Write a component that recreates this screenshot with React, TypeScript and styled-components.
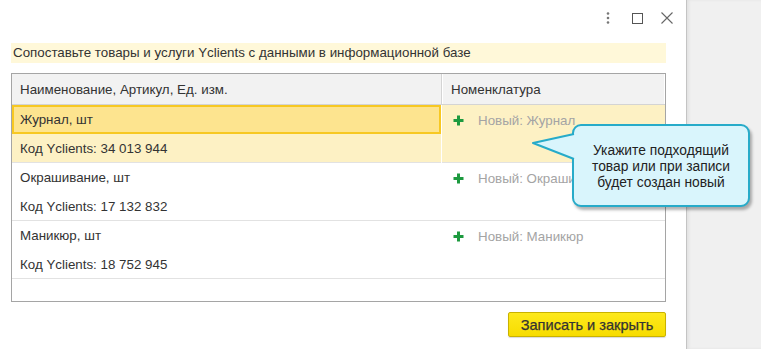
import React from "react";
import styled, { createGlobalStyle } from "styled-components";

const GlobalStyle = createGlobalStyle`
  html, body {
    margin: 0;
    padding: 0;
    background: #f0f0f0;
  }
  body {
    font-family: "Liberation Sans", Arial, sans-serif;
    font-size: 13.35px;
    color: #333;
  }
`;

type Item = {
  name: string;
  code: string;
  product: string;
};

const items: Item[] = [
  { name: "Журнал, шт", code: "34 013 944", product: "Журнал" },
  { name: "Окрашивание, шт", code: "17 132 832", product: "Окрашивание" },
  { name: "Маникюр, шт", code: "18 752 945", product: "Маникюр" },
];

const PlusIcon = () => (
  <svg width="11" height="11" viewBox="0 0 11 11">
    <path d="M5.5 0.5v10M0.5 5.5h10" stroke="#1d9a3f" strokeWidth="3" />
  </svg>
);

const App = () => {
  return (
    <Page>
      <GlobalStyle />
      <Dialog>
        <TitleBar>
          <IconButton $narrow aria-label="more">
            <svg width="4" height="12" viewBox="0 0 4 12">
              <circle cx="2" cy="1.5" r="1.3" fill="#777" />
              <circle cx="2" cy="6" r="1.3" fill="#777" />
              <circle cx="2" cy="10.5" r="1.3" fill="#777" />
            </svg>
          </IconButton>
          <IconButton aria-label="maximize">
            <svg width="11" height="11" viewBox="0 0 11 11">
              <rect x="0.5" y="0.5" width="10" height="10" fill="none" stroke="#555" />
            </svg>
          </IconButton>
          <IconButton aria-label="close">
            <svg width="12" height="12" viewBox="0 0 12 12">
              <path d="M0.5 0.5l11 11M11.5 0.5l-11 11" stroke="#666" strokeWidth="1.1" />
            </svg>
          </IconButton>
        </TitleBar>

        <Banner>Сопоставьте товары и услуги Yclients с данными в информационной базе</Banner>

        <Table>
          <HeaderRow>
            <HeaderCell>Наименование, Артикул, Ед. изм.</HeaderCell>
            <HeaderCell>Номенклатура</HeaderCell>
          </HeaderRow>
          {items.map((item, i) => (
            <Row key={item.code} $active={i === 0}>
              <NameCell $active={i === 0}>
                <NameLine $selected={i === 0}>{item.name}</NameLine>
                <NameLine>Код Yclients: {item.code}</NameLine>
              </NameCell>
              <ProductCell>
                <NewLink>
                  <PlusIcon />
                  <span>Новый: {item.product}</span>
                </NewLink>
              </ProductCell>
            </Row>
          ))}
        </Table>

        <Footer>
          <PrimaryButton>Записать и закрыть</PrimaryButton>
        </Footer>

        <Tooltip>
          <TooltipTail width="44" height="30" viewBox="0 0 44 30">
            <path d="M42 2 L1 11 L42 27" fill="#d9f5fc" stroke="#27abc9" strokeWidth="2" strokeLinejoin="round" />
          </TooltipTail>
          Укажите подходящий
          <br />
          товар или при записи
          <br />
          будет создан новый
        </Tooltip>
      </Dialog>
      <Side />
    </Page>
  );
};

export default App;

const Page = styled.div`
  display: flex;
  width: 761px;
  height: 349px;
  overflow: hidden;
`;

const Dialog = styled.div`
  position: relative;
  width: 687px;
  height: 349px;
  box-sizing: border-box;
  background: #fff;
  border-right: 1px solid #c4c4c4;
  display: flex;
  flex-direction: column;
  padding: 0 20px 0 11px;
`;

const Side = styled.div`
  flex: 1;
  background: #f0f0f0;
  box-shadow: inset 2px 0 3px rgba(0, 0, 0, 0.06);
`;

const TitleBar = styled.div`
  height: 36px;
  display: flex;
  justify-content: flex-end;
  align-items: center;
  margin-right: -16px;
`;

const IconButton = styled.div<{ $narrow?: boolean }>`
  width: ${(p) => (p.$narrow ? "20px" : "30px")};
  margin-right: ${(p) => (p.$narrow ? "4px" : "0")};
  height: 30px;
  display: flex;
  align-items: center;
  justify-content: center;
`;

const Banner = styled.div`
  margin-top: 7px;
  height: 20px;
  line-height: 20px;
  padding-left: 2px;
  background: #fff8d9;
  color: #333;
  white-space: nowrap;
`;

const Table = styled.div`
  margin-top: 10px;
  height: 229px;
  box-sizing: border-box;
  border: 1px solid #a5a5a5;
  display: flex;
  flex-direction: column;
`;

const HeaderRow = styled.div`
  display: grid;
  grid-template-columns: 430px 1fr;
  height: 31px;
  box-sizing: border-box;
  background: #f2f2f2;
  border-bottom: 1px solid #d4d4d4;
`;

const HeaderCell = styled.div`
  display: flex;
  align-items: center;
  padding-left: 8px;
  box-sizing: border-box;

  &:first-child {
    border-right: 1px solid #d4d4d4;
  }
  &:last-child {
    border-left: 1px solid #fff;
    border-right: 1px solid #fff;
    padding-left: 8px;
  }
`;

const Row = styled.div<{ $active?: boolean }>`
  display: grid;
  grid-template-columns: 430px 1fr;
  height: 58px;
  box-sizing: border-box;
  border-bottom: 1px solid #e2e2e2;
  background: ${(p) => (p.$active ? "#fdf1c4" : "#fff")};
`;

const NameCell = styled.div<{ $active?: boolean }>`
  display: flex;
  flex-direction: column;
  border-right: 1px solid ${(p) => (p.$active ? "#fff" : "transparent")};
`;

const NameLine = styled.div<{ $selected?: boolean }>`
  height: 29px;
  box-sizing: border-box;
  display: flex;
  align-items: center;
  flex-shrink: 0;
  padding-left: ${(p) => (p.$selected ? "6px" : "8px")};
  background: ${(p) => (p.$selected ? "#fde48f" : "transparent")};
  border: ${(p) => (p.$selected ? "2px solid #f7c822" : "none")};
`;

const ProductCell = styled.div`
  padding: 8px 0 0 11px;
`;

const NewLink = styled.div`
  display: flex;
  align-items: center;
  gap: 14px;
  color: #a4a4a4;
`;

const Footer = styled.div`
  display: flex;
  justify-content: flex-end;
  margin-top: 10px;
`;

const PrimaryButton = styled.button`
  width: 158px;
  height: 25px;
  box-sizing: border-box;
  border: 1px solid #c9b200;
  border-radius: 2px;
  background: linear-gradient(#fde91d, #f7dc00);
  box-shadow: 0 1px 1px rgba(0, 0, 0, 0.15);
  font-family: "Liberation Sans", Arial, sans-serif;
  font-size: 14.6px;
  color: #333;
  padding: 0;
  -webkit-text-stroke: 0.25px #333;
`;

const Tooltip = styled.div`
  position: absolute;
  left: 572px;
  top: 124px;
  width: 178px;
  height: 83px;
  box-sizing: border-box;
  border: 2px solid #27abc9;
  border-radius: 9px;
  background: #d9f5fc;
  box-shadow: 2px 3px 3px rgba(0, 0, 0, 0.3);
  display: flex;
  flex-direction: column;
  justify-content: center;
  align-items: center;
  text-align: center;
  font-size: 13.8px;
  line-height: 16px;
  color: #222;
  padding-top: 3px;
`;

const TooltipTail = styled.svg`
  position: absolute;
  left: -42px;
  top: 6px;
`;
